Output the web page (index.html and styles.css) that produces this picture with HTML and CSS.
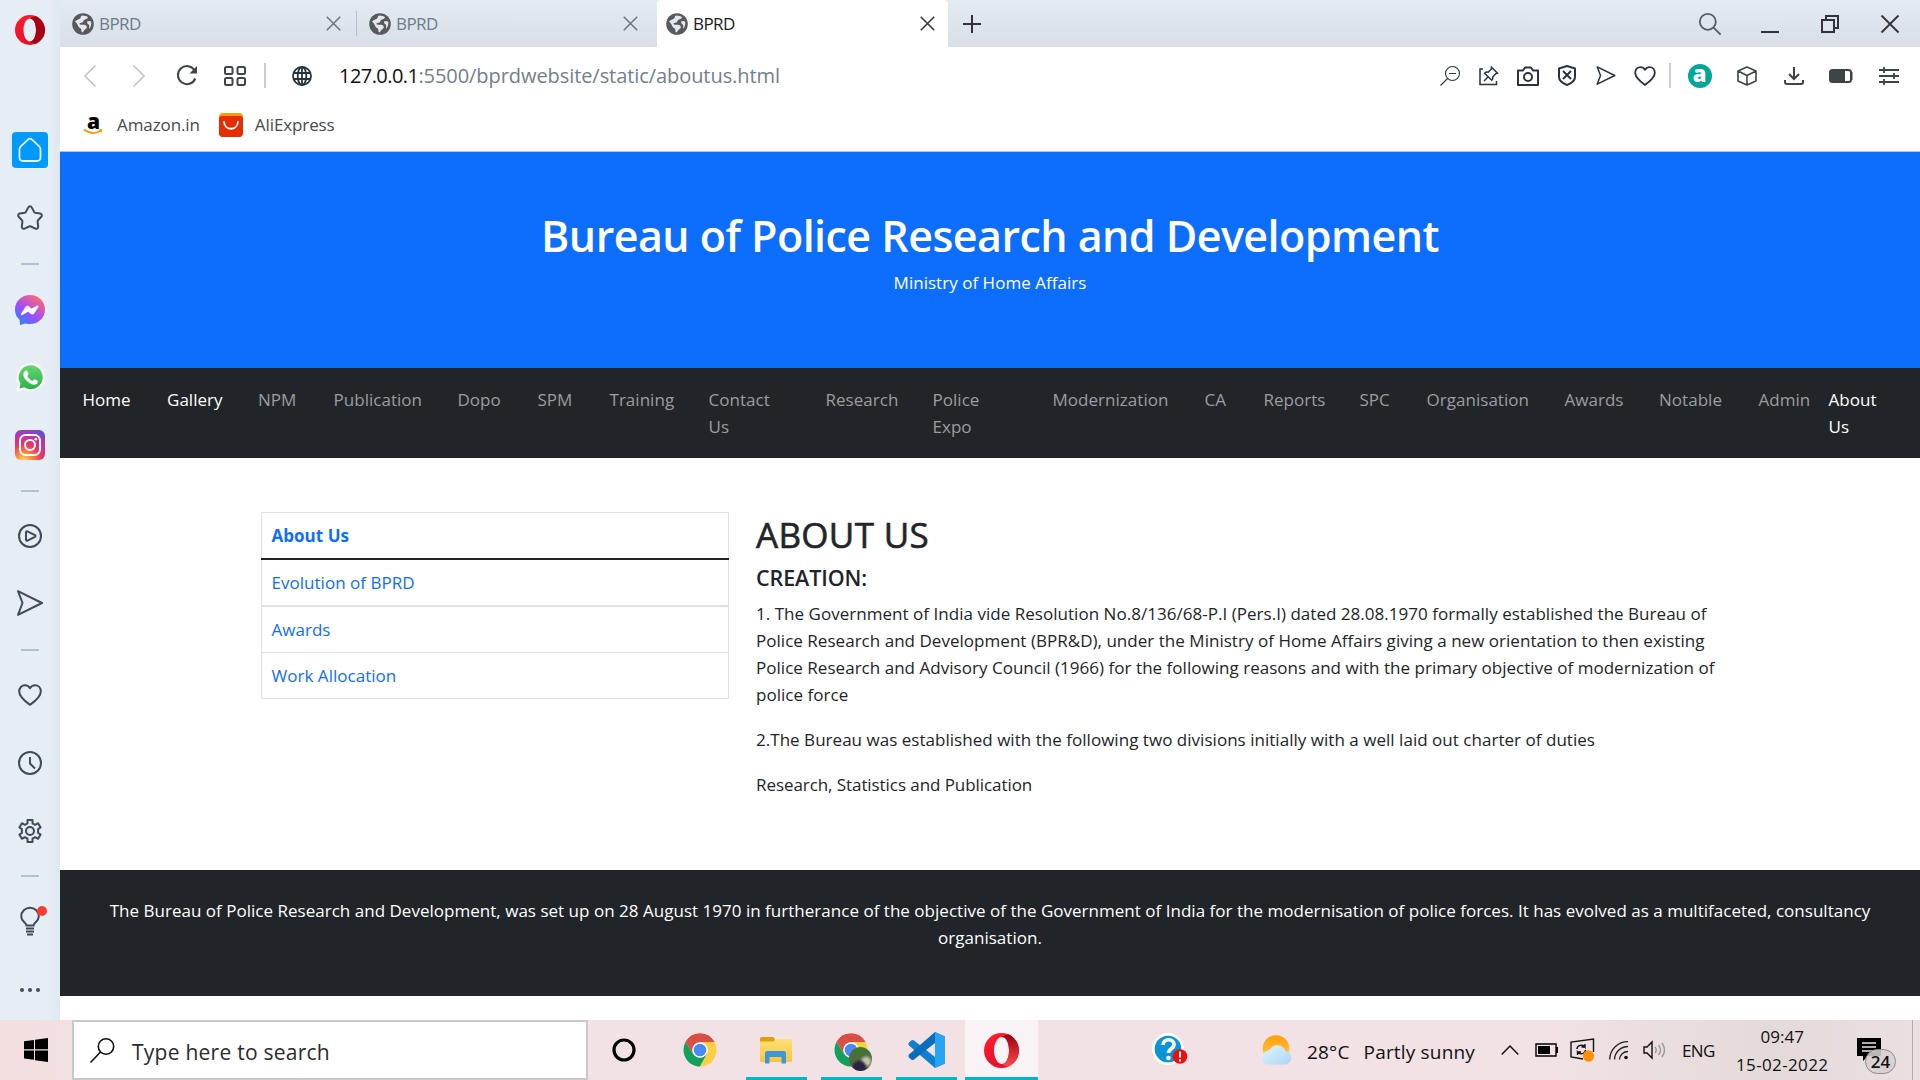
FILE: index.html
```html
<!DOCTYPE html>
<html lang="en">
<head>
<meta charset="utf-8">
<title>BPRD</title>
<link rel="stylesheet" href="styles.css">
</head>
<body>
<svg class="defs" aria-hidden="true">
  <defs>
    <symbol id="tab-globe" viewBox="0 0 22 22">
      <circle cx="11" cy="11" r="10.8" fill="#58595b"/>
      <path d="M3 8.6C4.600 7 6.800 6.500 8.200 5.600 9 4.400 8.600 2.600 10.400 2.600c2 0 4.800.8 5.600 1.800-.6 1.600-2.600 1.600-4 2.600-1 .8-.4 2.200-1.800 2.600-1.200.4-2.600.4-2.800 1.400.6 1 2.600.6 4.600.8 1.600.2 3 1 2.800 2.400-.2 1.600-1.800 2-2.600 3-.6.8-1 2-2 2.200-.8-.4-.8-2-1-3-.4-1.400-2-1.600-2.600-2.600C5.800 12 5 10.400 3 8.600z" fill="#e3e8ee"/>
      <path d="M15 8.500c1.600-.9 3.200-.6 4.200.3.400 2.600-.4 5.200-1.800 7-.6-1.200.2-2.600-.4-3.800-.6-1-2-1.200-2-3.500z" fill="#e3e8ee"/>
    </symbol>
    <symbol id="cross" viewBox="0 0 20 20"><path d="M1 1l18 18M19 1L1 19" fill="none" stroke="currentColor"/></symbol>
    <symbol id="heart" viewBox="0 0 24 22"><path d="M12 20.800C7.500 17.500 1.200 13 1.200 7.400 1.200 3.800 3.700 1.200 7 1.200c2.200 0 4 1.200 5 3 1-1.800 2.800-3 5-3 3.300 0 5.800 2.600 5.800 6.200 0 5.600-6.300 10.100-10.800 13.400z" fill="none" stroke="currentColor" stroke-linejoin="round"/></symbol>
    <symbol id="send" viewBox="0 0 26 26"><path d="M1 1.200l24 11.800-24 11.800L5.500 13z" fill="none" stroke="currentColor" stroke-linejoin="round"/></symbol>
    <linearGradient id="opera-l" x1="0" y1="0" x2="0" y2="1"><stop offset="0" stop-color="#ff1b2d"/><stop offset="1" stop-color="#e8112a"/></linearGradient>
    <linearGradient id="opera-r" x1="0" y1="0" x2="0" y2="1"><stop offset="0" stop-color="#9c0010"/><stop offset="1" stop-color="#ff4b4b"/></linearGradient>
    <linearGradient id="messenger" x1="0" y1="1" x2=".7" y2="0"><stop offset="0" stop-color="#0a94ff"/><stop offset=".5" stop-color="#a04bff"/><stop offset="1" stop-color="#ff6a70"/></linearGradient>
    <linearGradient id="whatsapp" x1="0" y1="0" x2="0" y2="1"><stop offset="0" stop-color="#66d66f"/><stop offset="1" stop-color="#2bb345"/></linearGradient>
    <radialGradient id="insta" cx=".3" cy="1.050" r="1.150"><stop offset="0" stop-color="#ffdc73"/><stop offset=".25" stop-color="#fb8a3c"/><stop offset=".5" stop-color="#e8395f"/><stop offset=".75" stop-color="#c032a8"/><stop offset="1" stop-color="#5b55d8"/></radialGradient>
    <linearGradient id="folder" x1="0" y1="0" x2="0" y2="1"><stop offset="0" stop-color="#ffe07a"/><stop offset="1" stop-color="#f9c43c"/></linearGradient>
    <linearGradient id="sun" x1="0" y1="0" x2="0" y2="1"><stop offset="0" stop-color="#ff9d0a"/><stop offset="1" stop-color="#ffd257"/></linearGradient>
    <linearGradient id="cloud" x1="0" y1="0" x2="1" y2="1"><stop offset="0" stop-color="#e4f4ff"/><stop offset="1" stop-color="#a9d6f5"/></linearGradient>
    <symbol id="chrome" viewBox="0 0 34 34">
      <path d="M17 17L2.700 8.800A16.500 16.500 0 0 1 31.300 8.800z" fill="#d94f41"/>
      <path d="M2.700 8.800A16.500 16.500 0 0 0 17 33.500L24 21 10 21z" fill="#13a05d"/>
      <path d="M17 33.500A16.500 16.500 0 0 0 31.300 8.800L17 9 24 21z" fill="#fecf40"/>
      <path d="M2.700 8.800L10 21 17 17 17 9 31.300 8.800A16.500 16.500 0 0 0 2.700 8.800z" fill="#d94f41"/>
      <circle cx="17" cy="17" r="7.800" fill="#fff"/><circle cx="17" cy="17" r="6.300" fill="#4a8af4"/>
    </symbol>
  </defs>
</svg>

<div class="desktop">
  <aside class="sidebar">
    <div class="side-item opera"><svg width="30" height="30" viewBox="0 0 30 30"><path fill-rule="evenodd" fill="url(#opera-l)" d="M15 0a15 15 0 1 0 0 30 15 15 0 1 0 0-30zm0 3.500c3.600 0 6 5 6 11.500s-2.400 11.500-6 11.500S8.500 21.500 8.500 15 11.400 3.500 15 3.500z"/><path fill="#a70014" d="M15 3.500C17 2 19 1.200 21 1.300 26 3.800 30 9 30 15s-4 11.200-9 13.700c-2 .1-4-.7-6-2.200 3.600 0 6-5 6-11.500s-2.400-11.500-6-11.500z"/></svg></div>
    <div class="side-item home"><span class="home-tile"><svg width="24" height="26" viewBox="0 0 24 26"><path d="M1.500 12.500c0-1.400.5-2.400 1.500-3.300l7-6.600c1.200-1.100 2.800-1.100 4 0l7 6.600c1 .9 1.500 1.900 1.500 3.300v7.800c0 2.500-1.200 3.700-3.700 3.700H5.200c-2.500 0-3.700-1.200-3.700-3.700z" fill="none" stroke="#e8f4ff" stroke-width="1.800"/></svg></span></div>
    <div class="side-item"><svg width="26" height="26" viewBox="0 0 26 26"><path d="M11.300 2.400c.7-1.400 2.700-1.400 3.400 0l2.400 4.500c.2.400.6.700 1.100.8l5 .8c1.600.3 2.200 2.100 1.100 3.300l-3.300 3.500c-.4.400-.5.900-.4 1.400l.6 4.900c.2 1.600-1.400 2.700-2.800 2l-4.500-2.100c-.5-.2-1.300-.2-1.800 0l-4.500 2.100c-1.400.7-3-.4-2.800-2l.6-4.900c.1-.5-.1-1-.4-1.400l-3.300-3.500C.6 10.600 1.200 8.800 2.800 8.500l5-.8c.5-.1.900-.4 1.100-.8z" fill="none" stroke="#414a57" stroke-width="2"/></svg></div>
    <div class="side-line"></div>
    <div class="side-item"><svg width="30" height="30" viewBox="0 0 30 30"><path d="M15 0c8.500 0 15 6.200 15 14.500S23.500 29 15 29c-1.600 0-3.100-.2-4.500-.6L5 30l-.3-5C1.700 22.400 0 18.800 0 14.500 0 6.200 6.500 0 15 0z" fill="url(#messenger)"/><path d="M6 18.800l4.500-7c.8-1.100 2.100-1.400 3.200-.6l3 2.300 5.500-3c.9-.4 1.800.4 1.300 1.200l-4.300 6.800c-.7 1.100-2.100 1.400-3.200.6L13 16.800l-5.700 3.200c-.9.5-1.800-.4-1.300-1.200z" fill="#fff"/></svg></div>
    <div class="side-item"><svg width="29" height="29" viewBox="0 0 29 29"><path d="M14.500 0a14 14 0 0 0-12 21L.5 28.500l8-2A14 14 0 1 0 14.500 0z" fill="#fff"/><path d="M14.600 2.200a12 12 0 0 0-10 18.400l-1.300 5 5-1.300A12 12 0 1 0 14.600 2.200z" fill="url(#whatsapp)"/><path d="M10.200 7.500c.6-.1 1 .2 1.300.8l1 2.500c.1.500 0 .8-1.200 2.200 1.300 2.400 3 4 5.400 5 .8-.9 1.300-1.700 1.600-1.700.5 0 3.200 1.300 3.500 1.600.3.500-.1 2.200-1 2.900-1.600 1.200-3.600 1.200-6-.1-3.200-1.500-6.500-4.700-7.300-7.900-.6-2.500.7-4.900 2.700-5.300z" fill="#fff"/></svg></div>
    <div class="side-item"><svg width="30" height="30" viewBox="0 0 30 30"><rect width="30" height="30" rx="6" fill="url(#insta)"/><rect x="5" y="5" width="20" height="20" rx="5.500" fill="none" stroke="#fff" stroke-width="2"/><circle cx="15" cy="15" r="5" fill="none" stroke="#fff" stroke-width="2"/><circle cx="20.800" cy="9.200" r="1.300" fill="#fff"/></svg></div>
    <div class="side-line"></div>
    <div class="side-item"><svg width="24" height="24" viewBox="0 0 24 24" fill="none" stroke="#414a57" stroke-width="2"><circle cx="12" cy="12" r="11"/><path d="M8 8.200c0-.8.700-1.200 1.400-.8l7.600 3.800c.7.400.7 1.200 0 1.600l-7.600 3.800c-.7.400-1.400 0-1.400-.8z"/></svg></div>
    <div class="side-item"><svg class="w2" width="26" height="26"><use href="#send"/></svg></div>
    <div class="side-line"></div>
    <div class="side-item"><svg class="w2" width="24" height="22"><use href="#heart"/></svg></div>
    <div class="side-item"><svg width="24" height="24" viewBox="0 0 24 24" fill="none" stroke="#414a57" stroke-width="2"><circle cx="12" cy="12" r="11"/><path d="M12 6v6.500l5 5"/></svg></div>
    <div class="side-item"><svg width="24" height="24" viewBox="0 0 24 24" fill="none" stroke="#414a57" stroke-width="2" stroke-linejoin="round"><circle cx="12" cy="12" r="4"/><path d="M9.500 1h5v3.300l2.700 1.500 2.900-1.600 2.500 4.300-2.500 1.700v3.600l2.500 1.700-2.500 4.300-2.900-1.600-2.700 1.500V23h-5v-3.300l-2.700-1.500-2.900 1.600-2.500-4.300 2.500-1.700v-3.600L1.400 8.500l2.500-4.300 2.900 1.600 2.700-1.500z"/></svg></div>
    <div class="side-line"></div>
    <div class="side-item bulb"><svg width="20" height="29" viewBox="0 0 20 29" fill="none" stroke="#414a57" stroke-width="2"><path d="M6.500 18.500C6.500 16 1.200 14.500 1.200 9.500a8.800 8.800 0 0 1 17.600 0c0 5-5.300 6.500-5.300 9z"/><path d="M6 21.500h8M6 24.500h8M7 27.500h6"/></svg><i class="red-dot"></i></div>
    <div class="side-item more"><svg width="20" height="4" viewBox="0 0 20 4" fill="#414a57"><circle cx="2" cy="2" r="2"/><circle cx="10" cy="2" r="2"/><circle cx="18" cy="2" r="2"/></svg></div>
  </aside>

  <div class="window">
    <div class="tabbar">
      <div class="tab"><svg width="22" height="22"><use href="#tab-globe"/></svg><span>BPRD</span><svg class="close" width="15" height="15"><use href="#cross"/></svg></div>
      <div class="tab-sep"></div>
      <div class="tab second"><svg width="22" height="22"><use href="#tab-globe"/></svg><span>BPRD</span><svg class="close" width="15" height="15"><use href="#cross"/></svg></div>
      <div class="tab active"><svg width="22" height="22"><use href="#tab-globe"/></svg><span>BPRD</span><svg class="close" width="15" height="15"><use href="#cross"/></svg></div>
      <svg class="plus" width="18" height="18" viewBox="0 0 18 18"><path d="M9 0v18M0 9h18" stroke="#303338" stroke-width="2"/></svg>
      <div class="win-buttons">
        <svg class="tab-search" width="22" height="22" viewBox="0 0 22 22" fill="none" stroke="#555c64" stroke-width="1.800"><circle cx="8.800" cy="8.800" r="8"/><path d="M14.600 14.600l7 7"/></svg>
        <svg width="18" height="18" viewBox="0 0 18 18"><path d="M0 17h18" stroke="#303338" stroke-width="2"/></svg>
        <svg width="18" height="18" viewBox="0 0 18 18" fill="none" stroke="#303338" stroke-width="2"><path d="M1 5h12v12H1zM5 5V1h12v12h-4"/></svg>
        <svg width="18" height="18" viewBox="0 0 18 18"><path d="M.5.500l17 17M17.500.500l-17 17" stroke="#303338" stroke-width="1.800"/></svg>
      </div>
    </div>

    <div class="toolbar">
      <div class="nav-icons">
        <svg width="12" height="22" viewBox="0 0 12 22"><path d="M11.500.500L1 11l10.500 10.500" fill="none" stroke="#bfc1c3" stroke-width="1.500"/></svg>
        <svg width="12" height="22" viewBox="0 0 12 22"><path d="M.5.500L11 11 .5 21.500" fill="none" stroke="#bfc1c3" stroke-width="1.500"/></svg>
        <svg width="22" height="21" viewBox="0 0 22 21"><path d="M19.300 13.500a9 9 0 1 1-.6-8" fill="none" stroke="#3f4447" stroke-width="2"/><path d="M21 1v7.500h-7.500z" fill="#3f4447"/></svg>
        <svg width="22" height="20" viewBox="0 0 22 20" fill="none" stroke="#3f4447" stroke-width="2"><rect x="1" y="1" width="7.500" height="7" rx="1.500"/><rect x="13.500" y="1" width="7.500" height="7" rx="1.500"/><rect x="1" y="12" width="7.500" height="7" rx="1.500"/><rect x="13.500" y="12" width="7.500" height="7" rx="1.500"/></svg>
      </div>
      <i class="bar-sep"></i>
      <svg class="site-globe" width="20" height="20" viewBox="0 0 20 20" fill="none" stroke="#28343e" stroke-width="1.800"><circle cx="10" cy="10" r="9"/><ellipse cx="10" cy="10" rx="4.300" ry="9"/><path d="M10 1v18M1.500 7h17M1.500 13h17"/></svg>
      <div class="url"><span class="host">127.0.0.1</span><span class="path">:5500/bprdwebsite/static/aboutus.html</span></div>
      <div class="actions">
        <svg width="20" height="20" viewBox="0 0 20 20" fill="none" stroke="#28343e" stroke-width="1.100"><circle cx="12.500" cy="7.500" r="7"/><path d="M7.500 12.500L.5 19.500M9 7.500h7"/></svg>
        <svg width="20" height="20" viewBox="0 0 20 20" fill="none" stroke="#28343e" stroke-width="1.500"><path d="M4 3H1v15.500h16.500V15"/><path d="M12.500 1.200l6 6-1.700.5-3 3c.2 1.800-.2 2.800-1 3.600L5.600 7.200c1-.9 2.200-1.300 3.600-1l3-3zM9 11l-4 4"/></svg>
        <svg width="22" height="20" viewBox="0 0 22 20" fill="none" stroke="#28343e" stroke-width="2"><path d="M1 4.500h5l2-3h6l2 3h5V19H1z" stroke-linejoin="round"/><circle cx="11" cy="11" r="4"/></svg>
        <svg width="18" height="21" viewBox="0 0 18 21" fill="none" stroke="#28343e" stroke-width="2"><path d="M9 1l8 2.500V12c0 4-3 6-8 8-5-2-8-4-8-8V3.500z" stroke-linejoin="round"/><path d="M5 6l8 8M13 6l-8 8"/></svg>
        <svg class="w2 dark" width="20" height="19"><use href="#send"/></svg>
        <svg class="w2 dark" width="22" height="20"><use href="#heart"/></svg>
      </div>
      <i class="bar-sep right-sep"></i>
      <div class="extensions">
        <span class="a-badge">a</span>
        <svg width="20" height="20" viewBox="0 0 20 20" fill="none" stroke="#3f4447" stroke-width="1.600" stroke-linejoin="round"><path d="M10 1l9 4v10l-9 4-9-4V5zM1 5l9 4.500L19 5M10 9.500V19"/></svg>
        <svg width="20" height="19" viewBox="0 0 20 19" fill="none" stroke="#3f4447" stroke-width="2"><path d="M10 1v12M5 8l5 5 5-5M1 14v2c0 1.300.7 2 2 2h14c1.300 0 2-.7 2-2v-2"/></svg>
        <svg width="24" height="14" viewBox="0 0 24 14"><rect x="1" y="1" width="21" height="12" rx="2.500" fill="none" stroke="#3f4447" stroke-width="2"/><path d="M2 1h14v12H2zM22 3h1.500v8H22z" fill="#3f4447"/></svg>
        <svg width="20" height="18" viewBox="0 0 20 18" stroke="#3f4447" stroke-width="1.800"><path d="M0 3h20M0 9h20M0 15h20M5 0v6M15 6v6M5 12v6"/></svg>
      </div>
    </div>

    <div class="bookmarks">
      <span class="amazon"><b>a</b><svg width="19" height="6" viewBox="0 0 19 6"><path d="M0 .5c6 4.500 12 4.500 17 1" fill="none" stroke="#f90" stroke-width="1.800"/><path d="M14.500.500L18.500 0l-1 4z" fill="#f90"/></svg></span>
      <span class="bm-label">Amazon.in</span>
      <svg class="ali" width="24" height="24" viewBox="0 0 24 24"><rect width="24" height="24" rx="4" fill="#ff9a00"/><path d="M0 6q0-3 3-3h18q3 0 3 3v14q0 4-4 4H4q-4 0-4-4z" fill="#e62e04"/><path d="M5 9c1 9 13 9 14 0" fill="none" stroke="#fff" stroke-width="1.800" stroke-linecap="round"/></svg>
      <span class="bm-label">AliExpress</span>
    </div>

    <main class="page">
      <header class="hero">
        <h1>Bureau of Police Research and Development</h1>
        <p>Ministry of Home Affairs</p>
      </header>
      <nav class="menu">
        <a class="on">Home</a><a class="on">Gallery</a><a>NPM</a><a>Publication</a><a>Dopo</a><a>SPM</a><a>Training</a><a>Contact<br>Us</a><a>Research</a><a>Police<br>Expo</a><a>Modernization</a><a>CA</a><a>Reports</a><a>SPC</a><a>Organisation</a><a>Awards</a><a>Notable</a><a>Admin</a><a class="on">About<br>Us</a>
      </nav>
      <section class="content">
        <div class="links">
          <a class="head">About Us</a>
          <a class="thick">Evolution of BPRD</a>
          <a>Awards</a>
          <a>Work Allocation</a>
        </div>
        <article>
          <h2>ABOUT US</h2>
          <h5>CREATION:</h5>
          <p>1. The Government of India vide Resolution No.8/136/68-P.I (Pers.I) dated 28.08.1970 formally established the Bureau of<br>Police Research and Development (BPR&amp;D), under the Ministry of Home Affairs giving a new orientation to then existing<br>Police Research and Advisory Council (1966) for the following reasons and with the primary objective of modernization of<br>police force</p>
          <p>2.The Bureau was established with the following two divisions initially with a well laid out charter of duties</p>
          <p class="short">Research, Statistics and Publication</p>
        </article>
      </section>
      <footer class="footer">
        <p>The Bureau of Police Research and Development, was set up on 28 August 1970 in furtherance of the objective of the Government of India for the modernisation of police forces. It has evolved as a multifaceted, consultancy<br>organisation.</p>
      </footer>
    </main>
  </div>

  <div class="taskbar">
    <div class="start"><svg width="24" height="24" viewBox="0 0 24 24"><path d="M0 3.200L10 1.900v9.400H0zM11 1.700L24 0v11.300H11zM0 12.400h10v9.400L0 20.500zM11 12.400h13V24l-13-1.700z"/></svg></div>
    <div class="search"><svg width="25" height="25" viewBox="0 0 25 25" fill="none" stroke="#111" stroke-width="1.600"><circle cx="16" cy="8.500" r="7.700"/><path d="M10.500 14L.5 24.500"/></svg><span>Type here to search</span></div>
    <div class="cortana"><svg width="24" height="24" viewBox="0 0 24 24"><circle cx="12" cy="12" r="10" fill="none" stroke="#000" stroke-width="3.200"/></svg></div>
    <div class="app plain"><svg width="34" height="34"><use href="#chrome"/></svg></div>
    <div class="app"><svg width="32" height="27" viewBox="0 0 32 27"><path d="M0 1.500Q0 0 1.500 0H13l2 2v4H0z" fill="#e0a008"/><path d="M0 4.500h13.500L16 2h14.500Q32 2 32 3.500v20q0 1.500-1.500 1.500h-29Q0 25 0 23.500z" fill="url(#folder)"/><path d="M5 26.500V16.500Q5 14 7.500 14h16q2.500 0 2.500 2.500v10h-4.500V20h-12v6.500z" fill="#3d96dc"/></svg></div>
    <div class="app"><svg width="34" height="34"><use href="#chrome"/></svg><i class="avatar"></i></div>
    <div class="app"><svg width="37" height="36" viewBox="0 0 37 36"><path d="M27 0L37 4.500v27L27 36 1 13.500q-1.500-1.500 0-3L3.200 8.500q1.300-1 2.800 0L27 25z" fill="#0f80cc"/><path d="M27 0L1 22.500q-1.500 1.500 0 3l2.200 2q1.300 1 2.800 0L27 11z" fill="#0a6ebd"/><path d="M27 0L37 4.500v27L27 36z" fill="#27a5f2"/></svg></div>
    <div class="app current"><svg width="35" height="35" viewBox="0 0 35 35"><path fill-rule="evenodd" fill="url(#opera-l)" d="M17.500 0a17.500 17.500 0 1 0 0 35 17.500 17.500 0 1 0 0-35zm.5 4c4.200 0 7 6 7 13.500S22.200 31 18 31s-8-6-8-13.500S13.800 4 18 4z"/><path fill="url(#opera-r)" d="M18 4c2-1.700 4-2.600 7-2.400 6 3 10 9 10 15.900s-4 12.900-10 15.900c-3 .2-5-.7-7-2.400 4.200 0 7-6 7-13.500S22.200 4 18 4z"/></svg></div>
    <div class="help"><svg width="36" height="34" viewBox="0 0 36 34"><circle cx="16" cy="16" r="16" fill="#fff"/><circle cx="16" cy="16" r="13.300" fill="#0b93d8"/><path d="M11 12c0-7 11-7 11-.5 0 4.500-5.500 4-5.500 8.500" fill="none" stroke="#fff" stroke-width="3.600"/><circle cx="16.500" cy="25" r="2.300" fill="#fff"/><circle cx="28" cy="23.500" r="7.300" fill="#f20d0d"/><path d="M28 18.500v6M28 26v2.500" stroke="#fff" stroke-width="2"/></svg></div>
    <div class="weather"><svg width="32" height="30" viewBox="0 0 32 30"><circle cx="15" cy="13.500" r="13.300" fill="url(#sun)"/><path d="M7 29.500a6.800 6.800 0 0 1-.5-13.500c.5-1 1.500-1.500 2.500-1.500a8.500 8.500 0 0 1 15.500 1.500 6.800 6.800 0 0 1 0 13.500z" fill="url(#cloud)"/></svg><span>28°C</span><span>Partly sunny</span></div>
    <div class="tray">
      <svg width="18" height="10" viewBox="0 0 18 10"><path d="M.7 9.500L9 1l8.300 8.500" fill="none" stroke="#111" stroke-width="1.500"/></svg>
      <svg width="23" height="14" viewBox="0 0 23 14"><path d="M1 1h20v12H1z" fill="none" stroke="#000" stroke-width="1.400"/><path d="M3 3h12v8H3zM21 4h2v6h-2z"/></svg>
      <svg width="25" height="24" viewBox="0 0 25 24"><path d="M13 21L1 19V4l22.500-3v13" fill="none" stroke="#111" stroke-width="1.400"/><path d="M7 11c0-4 6-5 8-2V6M15 9h-3.500M15.500 12c0 4-6 5-8 2v3M7.500 14H11" fill="none" stroke="#111" stroke-width="1.400"/><circle cx="18.500" cy="18" r="5.700" fill="#ff9100"/></svg>
      <svg width="20" height="19" viewBox="0 0 20 19" fill="none" stroke="#222" stroke-width="1.300"><path d="M.7 18.500A18 18 0 0 1 19 .700M5.500 18.500A13.500 13.500 0 0 1 19 5.500M10.500 18.500A8.500 8.500 0 0 1 19 10.500"/><circle cx="17" cy="16.500" r="1.800" fill="#111" stroke="none"/></svg>
      <svg width="23" height="18" viewBox="0 0 23 18" fill="none" stroke="#111" stroke-width="1.400"><path d="M1 6h3l5-5v16l-5-5H1z"/><g stroke="#999"><path d="M12 6q2.500 3 0 6M15.500 4q4 5 0 10M19 2q5 7 0 14"/></g></svg>
    </div>
    <div class="lang">ENG</div>
    <div class="clock"><span class="time">09:47</span><span class="date">15-02-2022</span></div>
    <div class="notice"><svg width="24" height="24" viewBox="0 0 24 24"><path d="M0 0h24v18H11l-5 5v-5H0z"/><path d="M5 5h14M5 9h14M5 13h14" stroke="#f1e2e4" stroke-width="1.300"/></svg><span class="count">24</span></div>
    <i class="peek"></i>
  </div>
</div>
</body>
</html>
```

FILE: styles.css
```css
* { box-sizing: border-box; }
body {
  margin: 0;
  font: 17px/27px "Open Sans", "Segoe UI", sans-serif;
  color: #212529;
  background: #fff;
  white-space: nowrap;
}
svg { display: block; flex: none; overflow: visible; }
i { display: block; }
h1, h2, h5, p { margin: 0; }
.defs { position: absolute; width: 0; height: 0; }
.w2 { color: #414a57; stroke-width: 2; }
.w2.dark { color: #28343e; }

.desktop {
  display: grid;
  grid-template-columns: 60px 1860px;
  grid-template-rows: 1020px 60px;
  width: 1920px;
  height: 1080px;
  overflow: hidden;
}

/* Browser sidebar */
.sidebar {
  display: grid;
  grid-template-rows: 116px 68px 68px 24px 68px 67px 68px 24px 66px 68px 26px 64px 71px 65px 25px 67px 65px;
  background: linear-gradient(90deg, #e5edf5 80%, #dfe9f2);
}
.side-item { display: grid; place-items: center; }
.side-item.opera { align-items: start; padding-top: 15px; }
.side-item.more { padding-top: 4px; }
.home-tile {
  display: grid;
  place-items: center;
  width: 36px;
  height: 36px;
  border-radius: 4px;
  background: #0099ff;
}
.side-line { place-self: center; width: 18px; height: 2px; background: #b3c1cd; }
.bulb { position: relative; }
.red-dot {
  position: absolute;
  left: 37px;
  top: 18px;
  width: 10px;
  height: 10px;
  border-radius: 50%;
  background: #ff3b30;
}

/* Tabs */
.window { display: flex; flex-direction: column; min-width: 0; }
.tabbar {
  display: flex;
  align-items: center;
  height: 47px;
  background: linear-gradient(#e3ebf3, #d8dfe6);
}
.tab {
  display: flex;
  align-items: center;
  width: 296px;
  height: 47px;
  padding: 0 15px 0 12px;
  color: #6c7c8b;
}
.tab span { margin: 0 auto 0 5px; font-size: 17px; letter-spacing: -.6px; }
.tab .close { color: #6d747b; stroke-width: 2; }
.tab-sep { width: 1px; height: 25px; background: #b3c1cd; }
.tab.second { width: 300px; padding-right: 19px; }
.tab.active { width: 291px; padding: 0 13px 0 9px; color: #1c2126; background: #fff; border-radius: 4px 4px 0 0; }
.tab.active .close { color: #303338; }
.plus { margin-left: 15px; }
.win-buttons { display: flex; align-items: center; gap: 42px; margin: 0 21px 0 auto; }
.tab-search { margin-right: -2px; }

/* Address bar */
.toolbar { display: flex; align-items: center; height: 56px; padding: 1px 7px 0 6px; background: #fff; }
.nav-icons { display: grid; grid-template-columns: 48px 49px 48px 48px; justify-items: center; align-items: center; }
.bar-sep { width: 2px; height: 25px; margin-left: 5px; background: #cdcdcd; }
.site-globe { margin-left: 26px; }
.url { display: flex; margin-left: 27px; font-size: 20px; }
.host { color: #111; letter-spacing: -.55px; }
.path { color: #70808f; letter-spacing: -.07px; }
.actions { display: grid; grid-template-columns: repeat(6, 39px); justify-items: center; align-items: center; margin-left: auto; }
.right-sep { margin-left: 5px; }
.extensions { display: grid; grid-template-columns: 47px 47px 47px 48px 48px; justify-items: center; align-items: center; margin-left: 5px; }
.a-badge {
  width: 24px;
  height: 24px;
  border-radius: 50%;
  background: #00a698;
  color: #fff;
  font: 800 22px/19px "Open Sans", sans-serif;
  text-align: center;
}

/* Bookmarks */
.bookmarks {
  display: flex;
  align-items: center;
  height: 49px;
  padding: 0 24px 5px;
  border-bottom: 1px solid #b3c1cd;
  color: #45494e;
}
.amazon { display: grid; justify-items: center; width: 19px; margin-right: 14px; }
.amazon b { font: 800 21px/15px "Open Sans", sans-serif; color: #000; }
.bm-label { letter-spacing: -.1px; }
.ali { margin: 0 12px 0 19px; }

/* Page */
.page { flex: 1; background: #fff; letter-spacing: .03px; }
.hero { height: 216px; padding: 57px 0 0; text-align: center; color: #fff; background: #0d6efd; }
.hero h1 { font-size: 43px; line-height: 54px; font-weight: 600; letter-spacing: -.54px; }
.hero p { margin-top: 6px; }
.menu {
  display: grid;
  grid-template-columns: 84.5px 91px 75.5px 124px 80px 72px 99px 117px 107px 120px 152px 59px 96px 67px 138px 94.5px 99.5px 70px 55px;
  height: 90px;
  padding: 18px 0 0 22.5px;
  background: #212529;
  color: #9b9d9f;
}
.menu .on { color: #fff; }
.content { display: flex; align-items: flex-start; gap: 27px; height: 412px; padding: 54px 0 0 201px; }
.links { width: 468px; border: 1px solid #dee2e6; border-bottom: 0; color: #0d6efd; }
.links a { display: block; height: 46px; padding: 9px 9.5px 0; border-bottom: 1px solid #dee2e6; }
.links a.thick { height: 47px; border-bottom-width: 2px; }
.links a.head { height: 47px; margin: 0 -1px; padding-left: 10.5px; border-bottom: 2px solid #212529; font-weight: 700; }
h2 { padding-top: 1px; font-size: 35px; line-height: 43px; font-weight: 500; letter-spacing: .3px; -webkit-text-stroke: .6px #212529; }
h5 { margin: 8px 0 9px; font-size: 21.5px; line-height: 27px; font-weight: 600; letter-spacing: -.1px; }
article p { margin-bottom: 18px; }
article .short { letter-spacing: -.07px; }
.footer { height: 126px; padding-top: 27px; background: #212529; color: #fff; text-align: center; letter-spacing: .02px; }

/* Taskbar */
.taskbar {
  grid-column: 1 / -1;
  display: flex;
  align-items: center;
  color: #111;
  background: linear-gradient(90deg, #f3dfe0 0, #f2e2e5 20%, #f2e2e6 80%, #e5dada 92%, #ebe0e1);
}
.start { display: grid; place-items: center; width: 72px; }
.search {
  display: flex;
  align-items: center;
  gap: 17px;
  width: 516px;
  height: 60px;
  padding: 0 16px;
  border: 2px solid #c9c9c9;
  background: #fff;
  font-size: 21px;
  letter-spacing: .25px;
  color: #2b2b2b;
}
.search span { padding-top: 4px; }
.cortana { width: 72px; display: grid; place-items: center; }
.app {
  position: relative;
  display: grid;
  place-items: center;
  width: 61px;
  height: 60px;
  margin-right: 14px;
  padding: 3px 1px 0 0;
  border-bottom: 3px solid #00b7c3;
}
.app.plain { margin: 0 15px 0 10px; border-color: transparent; }
.app.current { width: 73px; margin: 0 0 0 -6px; background: #faf3f5; }
.avatar {
  position: absolute;
  left: 28px;
  top: 27px;
  width: 23px;
  height: 24px;
  border-radius: 50%;
  background: radial-gradient(circle at 45% 85%, #2a2440 0 20%, transparent 35%), radial-gradient(circle at 75% 60%, #c9c2a8 0 12%, transparent 30%), linear-gradient(#3c7a2d, #4f6b40 50%, #5b5a48);
}
.help { margin-left: 114px; }
.weather { display: flex; align-items: center; margin-left: 73px; font-size: 19px; letter-spacing: .18px; }
.weather span { margin-left: 14px; padding-top: 4px; }
.tray { display: grid; grid-template-columns: 21px 22px 26px 21px 22px; column-gap: 13px; align-items: center; margin-left: 26px; }
.lang { width: 33px; margin-left: 17px; letter-spacing: -.7px; }
.clock { display: grid; justify-items: center; width: 92px; margin-left: 21px; padding-top: 2px; line-height: 28px; }
.date { letter-spacing: .36px; }
.notice { position: relative; width: 40px; height: 24px; margin-left: 29px; }
.count {
  position: absolute;
  left: 8px;
  top: 11px;
  width: 31px;
  height: 25px;
  border: 1px solid #8f8a8b;
  border-radius: 13px;
  background: rgba(214, 208, 208, .88);
  font: 600 17px/23px "Open Sans", sans-serif;
  text-align: center;
}
.peek { width: 1px; height: 60px; margin: 0 7px 0 auto; background: #b5abad; }
```
